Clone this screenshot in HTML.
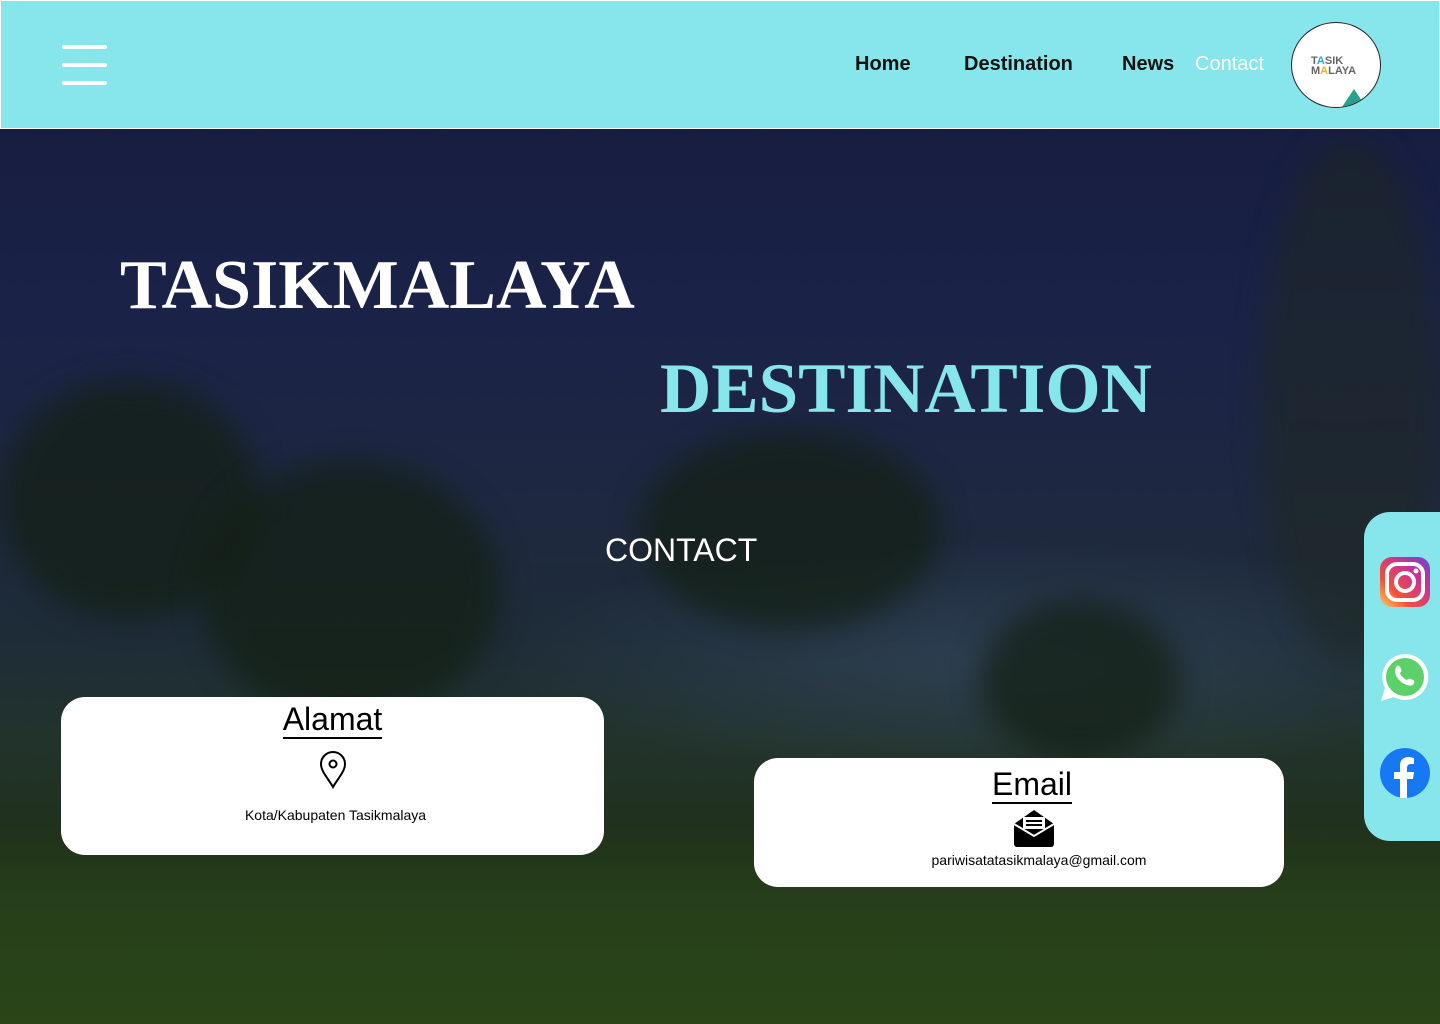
<!DOCTYPE html>
<html><head><meta charset="utf-8"><style>
*{margin:0;padding:0;box-sizing:border-box}
body{width:1440px;height:1024px;overflow:hidden;font-family:"Liberation Sans",sans-serif;position:relative;
background:
radial-gradient(ellipse 500px 120px at 1000px 660px, rgba(60,80,110,.5), transparent),
linear-gradient(180deg,#141a3a 0%,#1a2248 30%,#1e2840 50%,#1e2c38 62%,#22332c 72%,#1f3018 84%,#22361a 100%);}
.tree{position:absolute;border-radius:50%;background:rgba(18,32,18,.7);filter:blur(14px)}
header{position:absolute;left:0;top:0;width:1440px;height:129px;background:#86e6eb;border:1px solid #fff}
.burger{position:absolute;left:61px;top:44px;width:45px}
.burger div{height:4px;background:#fff;margin-bottom:14px;border-radius:2px}
nav a{position:absolute;top:52px;font-size:20px;font-weight:bold;color:#111;text-decoration:none}
.logo{position:absolute;left:1290px;top:21px;width:90px;height:86px;border-radius:50%;background:#fff;border:1.5px solid #222;overflow:hidden}
h1{position:absolute;font-family:"Liberation Serif",serif;font-weight:bold;white-space:nowrap}
.card{position:absolute;background:#fff;border-radius:24px;text-align:center;color:#000}
.card h2{font-weight:normal;font-size:32px;display:inline-block;border-bottom:2px solid #000;line-height:36px}
.side{position:absolute;left:1364px;top:512px;width:80px;height:329px;background:#86e6eb;border-radius:26px 0 0 26px}
</style></head><body>
<div class="tree" style="left:0;top:380px;width:260px;height:240px"></div>
<div class="tree" style="left:200px;top:460px;width:300px;height:260px"></div>
<div class="tree" style="left:640px;top:430px;width:300px;height:200px"></div>
<div class="tree" style="left:980px;top:600px;width:200px;height:160px"></div>
<div class="tree" style="left:1260px;top:140px;width:180px;height:520px;background:rgba(30,40,30,.5)"></div>
<div style="position:absolute;left:0;top:820px;width:1440px;height:204px;background:linear-gradient(180deg,rgba(30,50,25,0),#263f1a 40%,#2a4518);"></div>
<header>
<div class="burger"><div></div><div></div><div></div></div>
<nav><a style="left:854px">Home</a><a style="left:963px">Destination</a><a style="left:1121px">News</a><a style="left:1194px;color:#fff;font-weight:normal">Contact</a></nav>
<div class="logo"><div style="position:absolute;left:19px;top:33px;font-weight:bold;font-size:11px;line-height:10px;color:#666">T<span style="color:#2aa8d8">A</span>SIK<br>M<span style="color:#f0b020">A</span>LAYA</div>
<div style="position:absolute;left:50px;top:66px;width:0;height:0;border-left:12px solid transparent;border-right:12px solid transparent;border-bottom:18px solid #2aa090"></div></div>
</header>
<h1 style="left:120px;top:246px;font-size:70px;color:#fff">TASIKMALAYA</h1>
<h1 style="left:660px;top:349px;font-size:71px;color:#86e6eb">DESTINATION</h1>
<div style="position:absolute;left:605px;top:532px;font-size:32px;color:#fff">CONTACT</div>
<div class="card" style="left:61px;top:697px;width:543px;height:158px">
<h2 style="margin-top:4px">Alamat</h2>
<svg style="display:block;margin:12px auto 0" width="28" height="38" viewBox="0 0 28 38"><path d="M14 36C8 26 2 20 2 13a12 12 0 0 1 24 0c0 7-6 13-12 23z" fill="none" stroke="#000" stroke-width="2"/><circle cx="14" cy="13" r="3.5" fill="none" stroke="#000" stroke-width="2"/></svg>
<div style="font-size:14px;margin-top:18px;padding-left:6px">Kota/Kabupaten Tasikmalaya</div></div>
<div class="card" style="left:754px;top:758px;width:530px;height:129px">
<h2 style="margin-top:8px;margin-left:26px">Email</h2>
<svg style="display:block;margin:4px auto 0 258px" width="44" height="40" viewBox="0 0 44 40"><path d="M2 16L22 2l20 14v20a3 3 0 0 1-3 3H5a3 3 0 0 1-3-3z" fill="#000"/><rect x="11" y="9" width="22" height="12" fill="#fff"/><rect x="14" y="12" width="16" height="2" fill="#000"/><rect x="14" y="16" width="16" height="2" fill="#000"/><path d="M2 16l20 12 20-12" fill="none" stroke="#fff" stroke-width="2"/></svg>
<div style="font-size:14px;margin-top:4px;padding-left:40px">pariwisatatasikmalaya@gmail.com</div></div>
<div class="side">
<svg style="position:absolute;left:16px;top:45px" width="50" height="50" viewBox="0 0 50 50"><defs><linearGradient id="ig" x1="0" y1="1" x2="1" y2="0"><stop offset="0" stop-color="#fdd05a"/><stop offset=".3" stop-color="#f3503a"/><stop offset=".7" stop-color="#c7309a"/><stop offset="1" stop-color="#5a4fd0"/></linearGradient></defs><rect width="50" height="50" rx="12" fill="url(#ig)"/><rect x="7" y="7" width="36" height="36" rx="10" fill="none" stroke="#fff" stroke-width="4"/><circle cx="25" cy="25" r="9" fill="none" stroke="#fff" stroke-width="4"/><circle cx="36" cy="14" r="2.5" fill="#fff"/></svg>
<svg style="position:absolute;left:16px;top:140px" width="50" height="50" viewBox="0 0 50 50"><path d="M25 2a23 23 0 0 0-20 34L1 49l13-4A23 23 0 1 0 25 2z" fill="#fff"/><circle cx="25" cy="25" r="19" fill="#5cd16a"/><path d="M17 14c2-1 3 0 4 3 1 2 0 3-1 4 1 3 4 6 7 7 1-1 2-2 4-1 3 1 4 2 3 4-1 3-4 3-7 2-6-2-11-7-12-13 0-3 1-5 2-6z" fill="#fff"/></svg>
<svg style="position:absolute;left:16px;top:236px" width="50" height="50" viewBox="0 0 50 50"><circle cx="25" cy="25" r="25" fill="#1877f2"/><path d="M27 50V31h6l1-7h-7v-4c0-2 1-4 4-4h3v-6c-1 0-3-1-5-1-6 0-9 3-9 9v6h-6v7h6v19z" fill="#fff"/></svg>
</div>
</body></html>
